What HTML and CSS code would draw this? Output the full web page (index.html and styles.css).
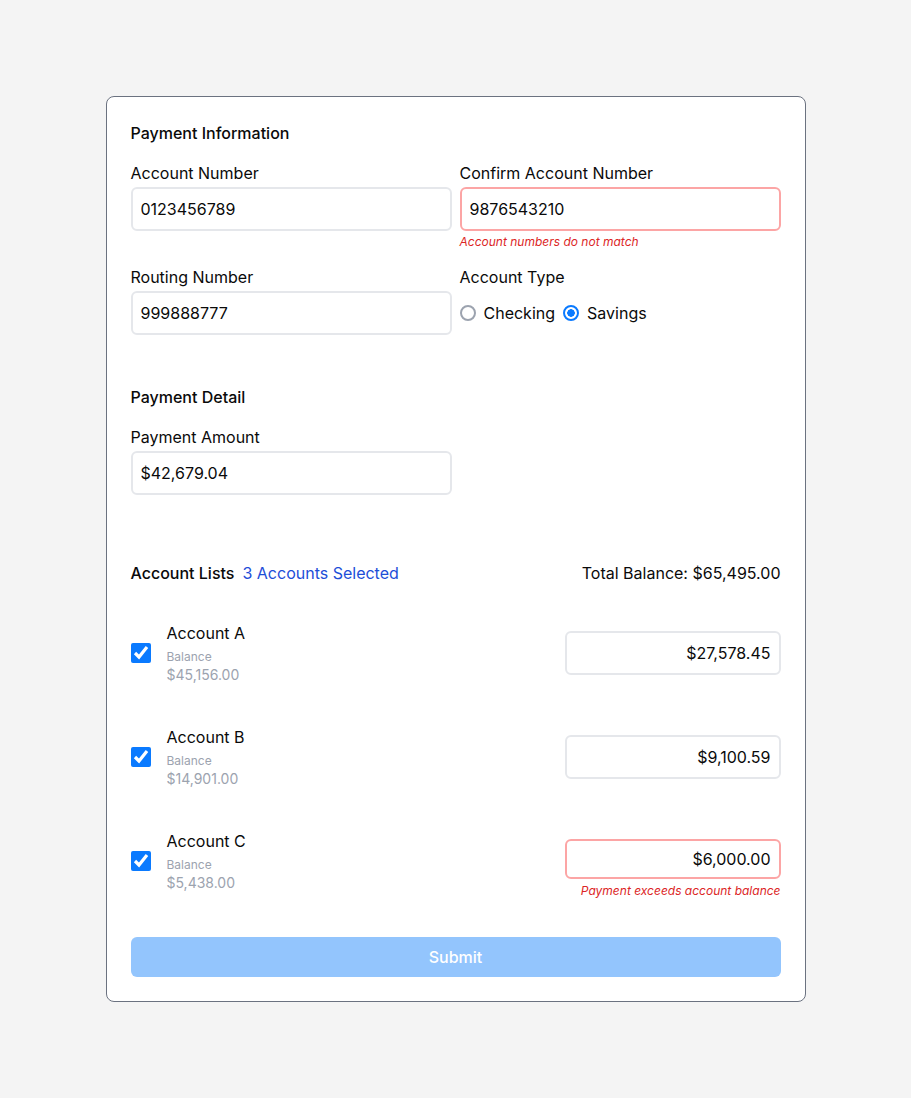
FILE: index.html
```html
<!DOCTYPE html>
<html lang="en">
<head>
<meta charset="utf-8">
<title>Payment</title>
<link rel="stylesheet" href="styles.css">
</head>
<body>
<main class="page">
  <form class="card">
    <section class="section">
      <h2 class="heading">Payment Information</h2>
      <div class="grid">
        <div class="field">
          <label class="label">Account Number</label>
          <input class="input" type="text" value="0123456789">
        </div>
        <div class="field">
          <label class="label">Confirm Account Number</label>
          <input class="input input-error" type="text" value="9876543210">
          <p class="error">Account numbers do not match</p>
        </div>
        <div class="field">
          <label class="label">Routing Number</label>
          <input class="input" type="text" value="999888777">
        </div>
        <div class="field">
          <span class="label">Account Type</span>
          <div class="radios">
            <label class="radio-opt"><input type="radio" name="type" class="radio"><span>Checking</span></label>
            <label class="radio-opt"><input type="radio" name="type" class="radio" checked><span>Savings</span></label>
          </div>
        </div>
      </div>
    </section>

    <section class="section section-detail">
      <h2 class="heading">Payment Detail</h2>
      <div class="grid">
        <div class="field">
          <label class="label">Payment Amount</label>
          <input class="input" type="text" value="$42,679.04">
        </div>
      </div>
    </section>

    <section class="section section-list">
      <div class="list-head">
        <div class="list-title"><h2 class="heading">Account Lists</h2><span class="selected">3 Accounts Selected</span></div>
        <div class="total">Total Balance: $65,495.00</div>
      </div>
      <div class="accounts">
        <div class="account">
          <div class="account-left">
            <input type="checkbox" class="check" checked>
            <div class="account-info">
              <div class="account-name">Account A</div>
              <div class="bal-label">Balance</div>
              <div class="bal-value">$45,156.00</div>
            </div>
          </div>
          <div class="account-right">
            <input class="input input-amount" type="text" value="$27,578.45">
          </div>
        </div>
        <div class="account">
          <div class="account-left">
            <input type="checkbox" class="check" checked>
            <div class="account-info">
              <div class="account-name">Account B</div>
              <div class="bal-label">Balance</div>
              <div class="bal-value">$14,901.00</div>
            </div>
          </div>
          <div class="account-right">
            <input class="input input-amount" type="text" value="$9,100.59">
          </div>
        </div>
        <div class="account">
          <div class="account-left">
            <input type="checkbox" class="check" checked>
            <div class="account-info">
              <div class="account-name">Account C</div>
              <div class="bal-label">Balance</div>
              <div class="bal-value">$5,438.00</div>
            </div>
          </div>
          <div class="account-right">
            <input class="input input-amount input-error" type="text" value="$6,000.00">
            <p class="error error-right">Payment exceeds account balance</p>
          </div>
        </div>
      </div>
    </section>

    <button type="button" class="submit" disabled>Submit</button>
  </form>
</main>
</body>
</html>
```

FILE: styles.css
```css
* { box-sizing: border-box; }

html, body {
  margin: 0;
  padding: 0;
}

body {
  background: #f4f4f4;
  font-family: Inter, "Noto Sans", "Liberation Sans", sans-serif;
  color: #0a0a0a;
}

.page {
  min-height: 100vh;
  display: flex;
  align-items: center;
  justify-content: center;
}

.card {
  width: 700px;
  background: #ffffff;
  border: 1px solid #6b7280;
  border-radius: 8px;
  padding: 24px;
  display: flex;
  flex-direction: column;
}

.section {
  display: flex;
  flex-direction: column;
  gap: 16px;
}

.section-detail { margin-top: 50px; }
.section-list { margin-top: 66px; gap: 0; }

.heading {
  margin: 0;
  font-size: 16px;
  line-height: 24px;
  font-weight: 500;
  color: #0a0a0a;
}

.grid {
  display: grid;
  grid-template-columns: 1fr 1fr;
  column-gap: 8px;
  row-gap: 15px;
}

.field {
  display: flex;
  flex-direction: column;
}

.label {
  font-size: 16px;
  line-height: 24px;
  margin-bottom: 2px;
  color: #0a0a0a;
}

.input {
  width: 100%;
  height: 44px;
  border: 2px solid #e5e7eb;
  border-radius: 6px;
  padding: 8px;
  font-family: inherit;
  font-size: 16px;
  line-height: 24px;
  color: #0a0a0a;
  background: #ffffff;
  outline: none;
}

.input-error { border-color: #fca5a5; }

.error {
  margin: 3px 0 0;
  font-size: 12px;
  line-height: 16px;
  font-style: italic;
  color: #dc2626;
}

.radios {
  height: 44px;
  display: flex;
  align-items: center;
  gap: 8px;
}

.radio-opt {
  display: flex;
  align-items: center;
  gap: 8px;
  font-size: 16px;
  line-height: 24px;
}

.radio {
  -webkit-appearance: none;
  appearance: none;
  width: 16px;
  height: 16px;
  margin: 0;
  border: 2px solid #9ca3af;
  border-radius: 50%;
  background: #ffffff;
}

.radio:checked {
  border-color: #0a7aff;
  background: radial-gradient(circle, #0a7aff 0 3.5px, #ffffff 4px);
}

.list-head {
  display: flex;
  justify-content: space-between;
  align-items: center;
  line-height: 24px;
}

.list-title {
  display: flex;
  align-items: center;
  gap: 8px;
}

.selected {
  font-size: 16px;
  color: #1d4ed8;
}

.total {
  font-size: 16px;
  color: #0a0a0a;
}

.accounts {
  margin-top: 36px;
  display: flex;
  flex-direction: column;
  gap: 40px;
}

.account {
  display: flex;
  justify-content: space-between;
  align-items: flex-start;
}

.account-left {
  display: flex;
  align-items: center;
  gap: 16px;
}

.check {
  width: 20px;
  height: 20px;
  margin: 0;
  accent-color: #0a7aff;
}

.account-info {
  display: flex;
  flex-direction: column;
}

.account-name {
  font-size: 16px;
  line-height: 24px;
  color: #0a0a0a;
}

.bal-label {
  margin-top: 4px;
  font-size: 12px;
  line-height: 16px;
  color: #9ca3af;
}

.bal-value {
  font-size: 14px;
  line-height: 20px;
  color: #9ca3af;
}

.account-right {
  width: 216px;
  margin-top: 10px;
  display: flex;
  flex-direction: column;
  align-items: flex-end;
  height: 44px;
}

.input-amount { text-align: right; }

.error-right {
  margin-top: 4px;
  white-space: nowrap;
}

.submit {
  margin-top: 44px;
  height: 40px;
  width: 100%;
  border: none;
  border-radius: 6px;
  background: #93c5fd;
  color: #ffffff;
  font-family: inherit;
  font-size: 16px;
  font-weight: 500;
}
```
